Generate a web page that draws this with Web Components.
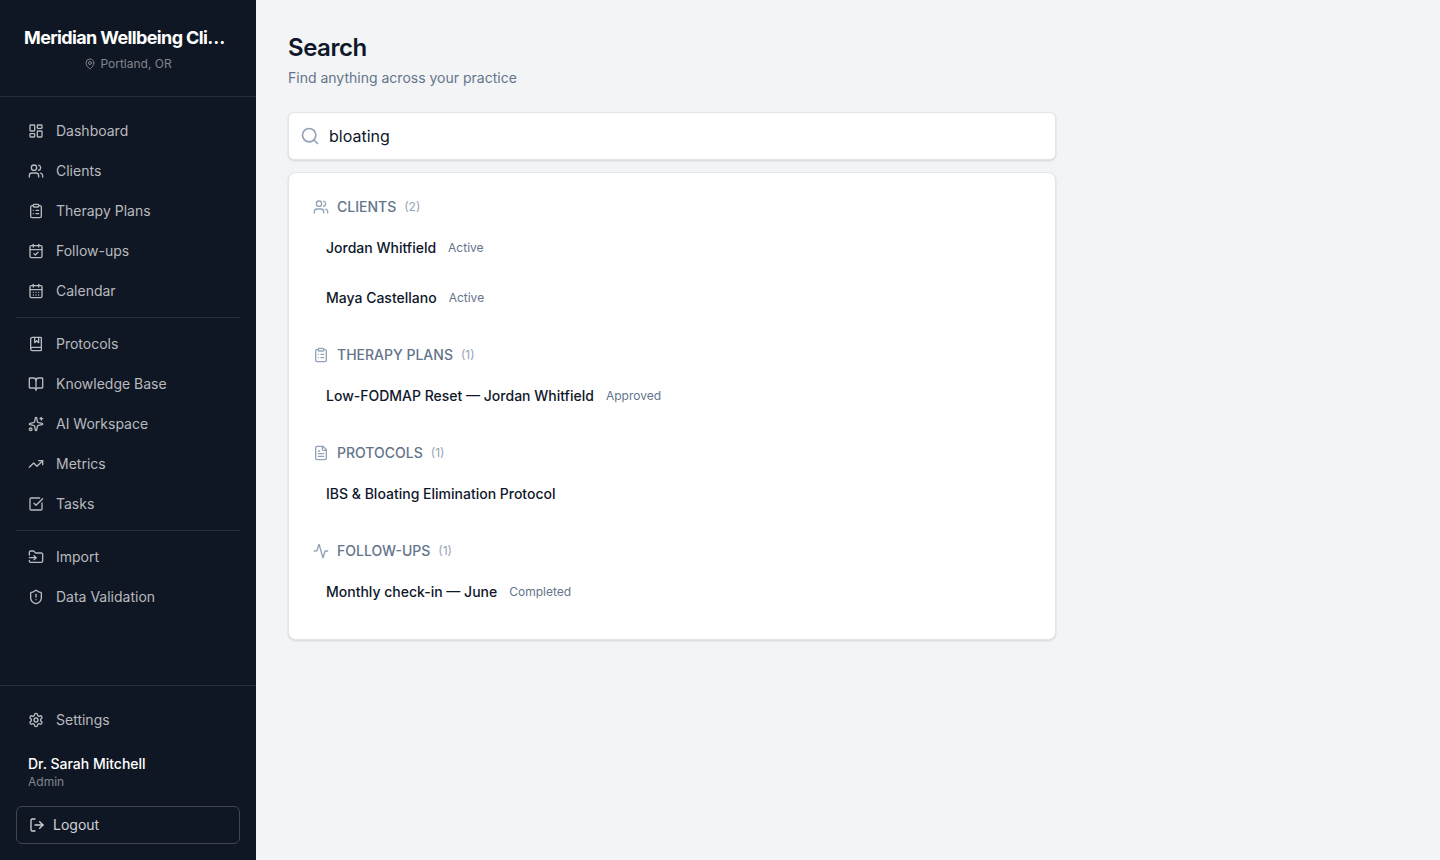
<!DOCTYPE html>
<html lang="en">
<head>
<meta charset="utf-8">
<title>Search</title>
<style>
  body {
    margin: 0;
    background: #f3f4f6;
    color: #0f172a;
    font-family: Inter, "Liberation Sans", sans-serif;
    font-size: 14px;
    line-height: 20px;
  }
</style>
</head>
<body>

<app-shell>
  <side-bar slot="sidebar" name="Meridian Wellbeing Clinic" place="Portland, OR">
    <nav-item icon="dashboard">Dashboard</nav-item>
    <nav-item icon="users">Clients</nav-item>
    <nav-item icon="clipboard">Therapy Plans</nav-item>
    <nav-item icon="calendar-check">Follow-ups</nav-item>
    <nav-item icon="calendar">Calendar</nav-item>
    <nav-divider></nav-divider>
    <nav-item icon="book-marked">Protocols</nav-item>
    <nav-item icon="book-open">Knowledge Base</nav-item>
    <nav-item icon="sparkles">AI Workspace</nav-item>
    <nav-item icon="trending">Metrics</nav-item>
    <nav-item icon="check-square">Tasks</nav-item>
    <nav-divider></nav-divider>
    <nav-item icon="folder-input">Import</nav-item>
    <nav-item icon="shield">Data Validation</nav-item>
    <nav-item slot="footer" icon="settings">Settings</nav-item>
    <user-info slot="footer" role-name="Admin">Dr. Sarah Mitchell</user-info>
    <logout-button slot="footer">Logout</logout-button>
  </side-bar>

  <page-header>
    Search
    <span slot="subtitle">Find anything across your practice</span>
  </page-header>
  <search-box value="bloating"></search-box>
  <result-list>
    <result-group icon="users" label="Clients" count="2">
      <result-item status="Active">Jordan Whitfield</result-item>
      <result-item status="Active">Maya Castellano</result-item>
    </result-group>
    <result-group icon="clipboard" label="Therapy Plans" count="1">
      <result-item status="Approved">Low-FODMAP Reset — Jordan Whitfield</result-item>
    </result-group>
    <result-group icon="file-text" label="Protocols" count="1">
      <result-item>IBS &amp; Bloating Elimination Protocol</result-item>
    </result-group>
    <result-group icon="activity" label="Follow-ups" count="1">
      <result-item status="Completed">Monthly check-in — June</result-item>
    </result-group>
  </result-list>
</app-shell>

<script>
let icons = {
  'dashboard': '<rect width="7" height="9" x="3" y="3" rx="1"/><rect width="7" height="5" x="14" y="3" rx="1"/><rect width="7" height="9" x="14" y="12" rx="1"/><rect width="7" height="5" x="3" y="16" rx="1"/>',
  'users': '<path d="M16 21v-2a4 4 0 0 0-4-4H6a4 4 0 0 0-4 4v2"/><circle cx="9" cy="7" r="4"/><path d="M22 21v-2a4 4 0 0 0-3-3.87"/><path d="M16 3.13a4 4 0 0 1 0 7.75"/>',
  'clipboard': '<rect width="8" height="4" x="8" y="2" rx="1"/><path d="M16 4h2a2 2 0 0 1 2 2v14a2 2 0 0 1-2 2H6a2 2 0 0 1-2-2V6a2 2 0 0 1 2-2h2"/><path d="M12 11h4"/><path d="M12 16h4"/><path d="M8 11h.01"/><path d="M8 16h.01"/>',
  'calendar-check': '<path d="M8 2v4"/><path d="M16 2v4"/><rect width="18" height="18" x="3" y="4" rx="2"/><path d="M3 10h18"/><path d="m9 16 2 2 4-4"/>',
  'calendar': '<path d="M8 2v4"/><path d="M16 2v4"/><rect width="18" height="18" x="3" y="4" rx="2"/><path d="M3 10h18"/><path d="M8 14h.01"/><path d="M12 14h.01"/><path d="M16 14h.01"/><path d="M8 18h.01"/><path d="M12 18h.01"/><path d="M16 18h.01"/>',
  'book-marked': '<path d="M10 2v8l3-3 3 3V2"/><path d="M4 19.5v-15A2.5 2.5 0 0 1 6.500 2H19a1 1 0 0 1 1 1v18a1 1 0 0 1-1 1H6.500a1 1 0 0 1 0-5H20"/>',
  'book-open': '<path d="M12 7v14"/><path d="M3 18a1 1 0 0 1-1-1V4a1 1 0 0 1 1-1h5a4 4 0 0 1 4 4 4 4 0 0 1 4-4h5a1 1 0 0 1 1 1v13a1 1 0 0 1-1 1h-6a3 3 0 0 0-3 3 3 3 0 0 0-3-3z"/>',
  'sparkles': '<path d="M11.017 2.814a1 1 0 0 1 1.966 0l1.051 5.558a2 2 0 0 0 1.594 1.594l5.558 1.051a1 1 0 0 1 0 1.966l-5.558 1.051a2 2 0 0 0-1.594 1.594l-1.051 5.558a1 1 0 0 1-1.966 0l-1.051-5.558a2 2 0 0 0-1.594-1.594l-5.558-1.051a1 1 0 0 1 0-1.966l5.558-1.051a2 2 0 0 0 1.594-1.594z"/><path d="M20 2v4"/><path d="M22 4h-4"/><circle cx="4" cy="20" r="2"/>',
  'trending': '<path d="M16 7h6v6"/><path d="m22 7-8.500 8.500-5-5L2 17"/>',
  'check-square': '<path d="M21 10.500V19a2 2 0 0 1-2 2H5a2 2 0 0 1-2-2V5a2 2 0 0 1 2-2h12.500"/><path d="m9 11 3 3L22 4"/>',
  'folder-input': '<path d="M2 9V5a2 2 0 0 1 2-2h3.900a2 2 0 0 1 1.690.9l.81 1.200a2 2 0 0 0 1.670.9H20a2 2 0 0 1 2 2v10a2 2 0 0 1-2 2H4a2 2 0 0 1-2-2v-1"/><path d="M2 13h10"/><path d="m9 16 3-3-3-3"/>',
  'shield': '<path d="M20 13c0 5-3.500 7.500-7.660 8.950a1 1 0 0 1-.67-.01C7.500 20.500 4 18 4 13V6a1 1 0 0 1 1-1c2 0 4.500-1.200 6.240-2.720a1.170 1.170 0 0 1 1.520 0C14.510 3.810 17 5 19 5a1 1 0 0 1 1 1z"/><path d="M12 8v4"/><path d="M12 16h.01"/>',
  'settings': '<path d="M12.220 2h-.44a2 2 0 0 0-2 2v.18a2 2 0 0 1-1 1.730l-.43.25a2 2 0 0 1-2 0l-.15-.08a2 2 0 0 0-2.730.73l-.22.38a2 2 0 0 0 .73 2.730l.15.1a2 2 0 0 1 1 1.720v.51a2 2 0 0 1-1 1.740l-.15.09a2 2 0 0 0-.73 2.730l.22.38a2 2 0 0 0 2.730.73l.15-.08a2 2 0 0 1 2 0l.43.25a2 2 0 0 1 1 1.730V20a2 2 0 0 0 2 2h.44a2 2 0 0 0 2-2v-.18a2 2 0 0 1 1-1.730l.43-.25a2 2 0 0 1 2 0l.15.08a2 2 0 0 0 2.730-.73l.22-.39a2 2 0 0 0-.73-2.730l-.15-.08a2 2 0 0 1-1-1.740v-.5a2 2 0 0 1 1-1.740l.15-.09a2 2 0 0 0 .73-2.730l-.22-.38a2 2 0 0 0-2.730-.73l-.15.08a2 2 0 0 1-2 0l-.43-.25a2 2 0 0 1-1-1.730V4a2 2 0 0 0-2-2z"/><circle cx="12" cy="12" r="3"/>',
  'logout': '<path d="m16 17 5-5-5-5"/><path d="M21 12H9"/><path d="M9 21H5a2 2 0 0 1-2-2V5a2 2 0 0 1 2-2h4"/>',
  'pin': '<path d="M20 10c0 4.993-5.539 10.193-7.399 11.799a1 1 0 0 1-1.202 0C9.539 20.193 4 14.993 4 10a8 8 0 0 1 16 0"/><circle cx="12" cy="10" r="3"/>',
  'search': '<path d="m21 21-4.340-4.340"/><circle cx="11" cy="11" r="8"/>',
  'file-text': '<path d="M15 2H6a2 2 0 0 0-2 2v16a2 2 0 0 0 2 2h12a2 2 0 0 0 2-2V7Z"/><path d="M14 2v4a2 2 0 0 0 2 2h4"/><path d="M10 9H8"/><path d="M16 13H8"/><path d="M16 17H8"/>',
  'activity': '<path d="M22 12h-2.480a2 2 0 0 0-1.930 1.460l-2.350 8.360a.25.25 0 0 1-.48 0L9.240 2.180a.25.25 0 0 0-.48 0l-2.350 8.360A2 2 0 0 1 4.490 12H2"/>'
};

// Registers a tag whose shadow root is filled by render(element).
function define(tag, render) {
  customElements.define(tag, class extends HTMLElement {
    constructor() {
      super();
      this.attachShadow({ mode : 'open' });
    }

    connectedCallback() {
      this.shadowRoot.innerHTML = render(this);
    }
  });
}

define('svg-icon', el => `
  <style>
    :host { display: block; flex: none; width: 16px; height: 16px; }
    svg { display: block; width: 100%; height: 100%; }
  </style>
  <svg viewBox="0 0 24 24" fill="none" stroke="currentColor" stroke-width="2"
    stroke-linecap="round" stroke-linejoin="round">${icons[el.getAttribute('name')]}</svg>
`);

define('app-shell', () => `
  <style>
    :host { display: flex; height: 100vh; }
    main { flex: 1; padding: 32px; }
    .column { display: flex; flex-direction: column; max-width: 768px; }
  </style>
  <slot name="sidebar"></slot>
  <main><div class="column"><slot></slot></div></main>
`);

define('side-bar', el => `
  <style>
    :host {
      display: flex;
      flex-direction: column;
      flex: none;
      width: 256px;
      background: #101724;
      color: #fff;
    }
    header { padding: 24px; border-bottom: 1px solid #282f3a; text-align: center; }
    h1 {
      margin: 0;
      font-size: 18px;
      line-height: 28px;
      font-weight: 700;
      letter-spacing: -0.63px;
      overflow: hidden;
      text-overflow: ellipsis;
      white-space: nowrap;
    }
    .place {
      display: flex;
      align-items: center;
      justify-content: center;
      gap: 4px;
      margin-top: 4px;
      font-size: 12px;
      line-height: 16px;
      color: #80858e;
    }
    .place svg-icon { width: 12px; height: 12px; }
    nav { flex: 1; display: flex; flex-direction: column; gap: 4px; padding: 16px; }
    footer { padding: 16px; border-top: 1px solid #282f3a; }
  </style>
  <header>
    <h1>${el.getAttribute('name')}</h1>
    <div class="place"><svg-icon name="pin"></svg-icon><span>${el.getAttribute('place')}</span></div>
  </header>
  <nav><slot></slot></nav>
  <footer><slot name="footer"></slot></footer>
`);

define('nav-item', el => `
  <style>
    :host {
      display: flex;
      align-items: center;
      gap: 12px;
      padding: 8px 12px;
      color: #b8babe;
    }
  </style>
  <svg-icon name="${el.getAttribute('icon')}"></svg-icon>
  <span><slot></slot></span>
`);

define('nav-divider', () => `
  <style>
    :host { display: block; height: 1px; margin: 4px 0; background: #282f3a; }
  </style>
`);

define('user-info', el => `
  <style>
    :host { display: block; padding: 16px 12px; }
    .name { font-weight: 500; color: #fff; }
    .role { font-size: 12px; line-height: 16px; color: #80858e; }
  </style>
  <div class="name"><slot></slot></div>
  <div class="role">${el.getAttribute('role-name')}</div>
`);

define('logout-button', () => `
  <style>
    :host { display: block; }
    button {
      display: flex;
      align-items: center;
      gap: 8px;
      width: 100%;
      padding: 8px 12px;
      border: 1px solid #40454f;
      border-radius: 6px;
      background: none;
      color: #cfd1d4;
      font: inherit;
    }
  </style>
  <button><svg-icon name="logout"></svg-icon><slot></slot></button>
`);

define('page-header', () => `
  <style>
    :host { display: block; margin-bottom: 24px; }
    h2 {
      margin: 0 0 4px;
      font-size: 24px;
      line-height: 32px;
      font-weight: 600;
      letter-spacing: -0.48px;
    }
    p { margin: 0; color: #64748b; }
  </style>
  <h2><slot></slot></h2>
  <p><slot name="subtitle"></slot></p>
`);

define('search-box', el => `
  <style>
    :host {
      display: flex;
      align-items: center;
      gap: 9px;
      box-sizing: border-box;
      height: 48px;
      padding: 0 11px;
      margin-bottom: 12px;
      border: 1px solid #e2e5ea;
      border-radius: 6px;
      background: #fff;
      box-shadow: 0 1px 3px rgba(0, 0, 0, 0.08), 0 1px 2px rgba(0, 0, 0, 0.06);
    }
    svg-icon { width: 20px; height: 20px; color: #94a3b8; }
    input {
      flex: 1;
      padding: 0;
      border: 0;
      outline: 0;
      background: none;
      color: inherit;
      font: inherit;
      font-size: 16px;
      line-height: 24px;
    }
  </style>
  <svg-icon name="search"></svg-icon>
  <input type="text" value="${el.getAttribute('value')}">
`);

define('result-list', () => `
  <style>
    :host {
      display: flex;
      flex-direction: column;
      gap: 24px;
      padding: 24px;
      border: 1px solid #e2e5ea;
      border-radius: 8px;
      background: #fff;
      box-shadow: 0 1px 3px rgba(0, 0, 0, 0.08), 0 1px 2px rgba(0, 0, 0, 0.06);
    }
  </style>
  <slot></slot>
`);

define('result-group', el => `
  <style>
    :host { display: block; }
    header { display: flex; align-items: center; gap: 8px; margin-bottom: 8px; }
    svg-icon { color: #94a3b8; }
    .label { font-weight: 500; text-transform: uppercase; color: #64748b; }
    .count { font-size: 12px; line-height: 16px; color: #94a3b8; }
    .items { display: flex; flex-direction: column; gap: 4px; }
  </style>
  <header>
    <svg-icon name="${el.getAttribute('icon')}"></svg-icon>
    <span class="label">${el.getAttribute('label')}</span>
    <span class="count">(${el.getAttribute('count')})</span>
  </header>
  <div class="items"><slot></slot></div>
`);

define('result-item', el => {
  let status = el.getAttribute('status');
  return `
    <style>
      :host {
        display: flex;
        align-items: center;
        gap: 12px;
        padding: 12px;
        border: 1px solid transparent;
      }
      .title { font-weight: 500; }
      .status { font-size: 12px; line-height: 16px; color: #64748b; }
    </style>
    <span class="title"><slot></slot></span>
    ${status ? `<span class="status">${status}</span>` : ''}
  `;
});
</script>
</body>
</html>
